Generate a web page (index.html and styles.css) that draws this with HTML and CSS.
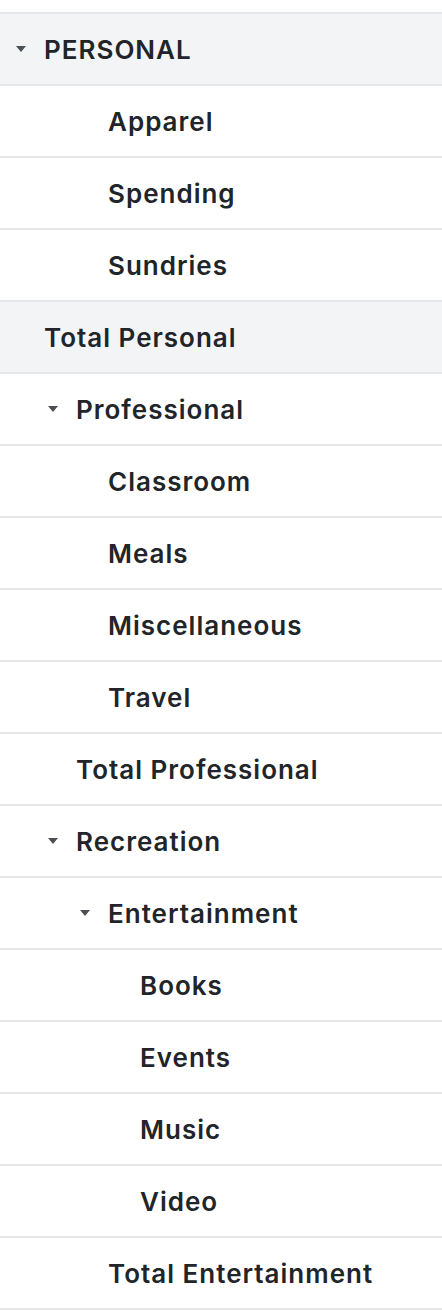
FILE: index.html
```html
<!DOCTYPE html>
<html>
<head>
<meta charset="utf-8">
<link rel="stylesheet" href="styles.css">
</head>
<body>
<div class="tree">
  <div class="row group lvl0"><span class="caret"></span><span class="label">PERSONAL</span></div>
  <div class="row lvl2"><span class="label">Apparel</span></div>
  <div class="row lvl2"><span class="label">Spending</span></div>
  <div class="row lvl2"><span class="label">Sundries</span></div>
  <div class="row group total lvl0"><span class="label">Total Personal</span></div>
  <div class="row lvl1"><span class="caret"></span><span class="label">Professional</span></div>
  <div class="row lvl2"><span class="label">Classroom</span></div>
  <div class="row lvl2"><span class="label">Meals</span></div>
  <div class="row lvl2"><span class="label">Miscellaneous</span></div>
  <div class="row lvl2"><span class="label">Travel</span></div>
  <div class="row total lvl1"><span class="label">Total Professional</span></div>
  <div class="row lvl1"><span class="caret"></span><span class="label">Recreation</span></div>
  <div class="row lvl2"><span class="caret"></span><span class="label">Entertainment</span></div>
  <div class="row lvl3"><span class="label">Books</span></div>
  <div class="row lvl3"><span class="label">Events</span></div>
  <div class="row lvl3"><span class="label">Music</span></div>
  <div class="row lvl3"><span class="label">Video</span></div>
  <div class="row total lvl2"><span class="label">Total Entertainment</span></div>
</div>
</body>
</html>
```
FILE: styles.css
```css
html, body {
  margin: 0;
  padding: 0;
  background: #ffffff;
}
body {
  padding-top: 12px;
  font-family: Inter, "Noto Sans", sans-serif;
}
.tree {
  display: flex;
  flex-direction: column;
  border-bottom: 2px solid #e5e7eb;
}
.row {
  display: flex;
  align-items: center;
  height: 70px;
  border-top: 2px solid #e5e7eb;
  color: #212529;
  font-size: 26px;
  font-weight: 600;
  letter-spacing: 1px;
  box-sizing: content-box;
}
.group {
  background: #f3f4f6;
}
.lvl0 { padding-left: 44px; }
.lvl1 { padding-left: 76px; }
.lvl2 { padding-left: 108px; }
.lvl3 { padding-left: 140px; }
.caret {
  flex: none;
  width: 0;
  height: 0;
  border-left: 5px solid transparent;
  border-right: 5px solid transparent;
  border-top: 6px solid #4b5057;
  margin-left: -28px;
  margin-right: 18px;
}
.label {
  white-space: nowrap;
}
```
